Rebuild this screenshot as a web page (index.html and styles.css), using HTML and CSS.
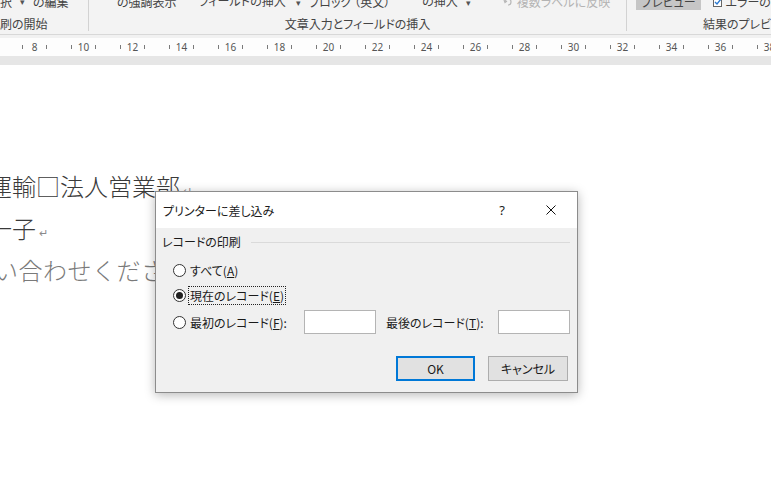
FILE: index.html
```html
<!DOCTYPE html>
<html lang="ja">
<head>
<meta charset="utf-8">
<title>プリンターに差し込み</title>
<link rel="stylesheet" href="styles.css">
</head>
<body>
<div class="screen">
  <div class="ribbon">
    <div class="grp g1">
      <div class="top"><span>択</span><span class="caret">▾</span><span class="g1-edit">の編集</span></div>
      <div class="lbl">刷の開始</div>
    </div>
    <div class="grp g2">
      <div class="top">
        <span class="i1">の強調表示</span>
        <span class="i2">フィールドの挿入<span class="caret">▾</span></span>
        <span class="i3">ブロック</span>
        <span class="i4">（英文）</span>
        <span class="i5">の挿入<span class="caret">▾</span></span>
        <span class="i6 dis"><svg class="ico" viewBox="0 0 10 10" width="10" height="10"><path d="M2 5 A3 3 0 1 1 5 8" fill="none" stroke="#b8b8b8" stroke-width="1.2"/><path d="M1 3 L2 5.5 L4 4" fill="none" stroke="#b8b8b8" stroke-width="1.2"/></svg>複数ラベルに反映</span>
      </div>
      <div class="lbl center">文章入力とフィールドの挿入</div>
    </div>
    <div class="grp g3">
      <div class="top">
        <span class="pressed">プレビュー</span>
        <span class="i7"><svg class="ico" viewBox="0 0 10 10" width="10" height="10"><rect x="0.5" y="0.5" width="8" height="9" fill="#fff" stroke="#666"/><path d="M2 5 L4 7 L8 2" fill="none" stroke="#2b79d0" stroke-width="1.4"/></svg>エラーのチェック</span>
      </div>
      <div class="lbl g3-lbl">結果のプレビュー</div>
    </div>
  </div>
  <div class="band"></div>
  <div class="ruler">
    <div class="cell"><i></i><b>8</b><i></i></div>
    <div class="cell"><i></i><b>10</b><i></i></div>
    <div class="cell"><i></i><b>12</b><i></i></div>
    <div class="cell"><i></i><b>14</b><i></i></div>
    <div class="cell"><i></i><b>16</b><i></i></div>
    <div class="cell"><i></i><b>18</b><i></i></div>
    <div class="cell"><i></i><b>20</b><i></i></div>
    <div class="cell"><i></i><b>22</b><i></i></div>
    <div class="cell"><i></i><b>24</b><i></i></div>
    <div class="cell"><i></i><b>26</b><i></i></div>
    <div class="cell"><i></i><b>28</b><i></i></div>
    <div class="cell"><i></i><b>30</b><i></i></div>
    <div class="cell"><i></i><b>32</b><i></i></div>
    <div class="cell"><i></i><b>34</b><i></i></div>
    <div class="cell"><i></i><b>36</b><i></i></div>
    <div class="cell"><i></i><b>38</b><i></i></div>
  </div>
  <div class="workspace"></div>
  <div class="page">
    <p class="line dark">運輸□法人営業部<span class="pm">↵</span></p>
    <p class="line dark">一子<span class="pm">↵</span></p>
    <p class="line light l3">い合わせください。</p>
  </div>

  <div class="dialog">
    <div class="dlg-title">
      <span class="dlg-name">プリンターに差し込み</span>
      <span class="dlg-help">?</span>
      <span class="dlg-close"><svg viewBox="0 0 10 10" width="10" height="10"><path d="M0.5 0.5 L9.5 9.5 M9.5 0.5 L0.5 9.5" stroke="#111" stroke-width="1" fill="none"/></svg></span>
    </div>
    <div class="dlg-body">
      <div class="grp-head"><span>レコードの印刷</span><span class="rule"></span></div>
      <div class="opt first"><span class="radio"></span><span class="opt-lbl">すべて(<u>A</u>)</span></div>
      <div class="opt"><span class="radio on"></span><span class="opt-lbl focus">現在のレコード(<u>E</u>)</span></div>
      <div class="opt range">
        <span class="radio"></span><span class="opt-lbl from">最初のレコード(<u>F</u>):</span>
        <span class="field"></span>
        <span class="opt-lbl to">最後のレコード(<u>T</u>):</span>
        <span class="field"></span>
      </div>
      <div class="btns">
        <button class="btn default">OK</button>
        <button class="btn">キャンセル</button>
      </div>
    </div>
  </div>
</div>
</body>
</html>
```
FILE: styles.css
```css
html, body {
  margin: 0;
  padding: 0;
}
body {
  width: 771px;
  height: 488px;
  overflow: hidden;
  background: #fff;
  font-family: "Noto Sans CJK JP", "Noto Sans", sans-serif;
  font-feature-settings: "palt";
}
.screen {
  position: relative;
  width: 771px;
  height: 488px;
  overflow: hidden;
  display: flex;
  flex-direction: column;
}

/* ribbon */
.ribbon {
  height: 34px;
  flex: none;
  background: #f3f3f3;
  border-bottom: 1px solid #d8d8d8;
  display: flex;
  align-items: flex-start;
  overflow: hidden;
  font-size: 12px;
  color: #444;
  white-space: nowrap;
}
.grp {
  height: 31px;
  display: flex;
  flex-direction: column;
  flex: none;
}
.g1 { width: 88px; border-right: 1px solid #d2d2d2; }
.g2 { width: 537px; border-right: 1px solid #d2d2d2; }
.g3 { flex: 1; }
.top {
  height: 16px;
  line-height: 16px;
  margin-top: -6px;
  display: flex;
  align-items: center;
}
.lbl {
  height: 16px;
  line-height: 16px;
  margin-top: 6px;
}
.lbl.center { text-align: center; }
.caret { font-size: 9px; margin-left: 8px; color: #555; }
.g1-edit { margin-left: 8px; }
.i1 { margin-left: 28px; }
.i2 { margin-left: 22px; }
.i2 .caret { margin-left: 10px; }
.i3 { margin-left: 8px; }
.i4 { margin-left: 3px; }
.i5 { margin-left: 32px; }
.i5 .caret { margin-left: 8px; }
.i6 { margin-left: 32px; display: flex; align-items: center; }
.dis { color: #b4b4b4; }
.ico { margin-right: 4px; flex: none; }
.pressed {
  margin-left: 9px;
  background: #c6c6c6;
  padding: 0 5px;
  line-height: 16px;
}
.i7 { margin-left: 12px; display: flex; align-items: center; }
.i7 .ico { margin-right: 3px; }
.g3-lbl { margin-left: 76px; }

/* ruler */
.band {
  height: 3px;
  flex: none;
  background: #f1f1f1;
}
.ruler {
  height: 18px;
  flex: none;
  background: #fdfdfd;
  display: flex;
  padding-left: 10px;
  overflow: hidden;
}
.cell {
  width: 49px;
  flex: none;
  display: flex;
  justify-content: center;
  align-items: center;
}
.cell i {
  display: block;
  width: 1px;
  height: 4px;
  background: #7a7a7a;
}
.cell b {
  width: 15px;
  margin: 0 4px;
  text-align: center;
  font-weight: normal;
  font-size: 10px;
  color: #555;
  font-family: "Noto Sans", sans-serif;
  line-height: 12px;
}
.workspace {
  height: 9px;
  flex: none;
  background: #e6e6e6;
}

/* page */
.page {
  flex: 1;
  background: #fff;
  padding-top: 100px;
  overflow: hidden;
}
.line {
  margin: 0 0 0 -12px;
  height: 42px;
  line-height: 42px;
  font-size: 24px;
  font-weight: 300;
  font-feature-settings: normal;
  white-space: nowrap;
}
.line.l3 { margin-left: -6px; letter-spacing: 0.5px; }
.dark { color: #3a3a3a; }
.light { color: #7a7a7a; }
.pm {
  font-size: 11px;
  color: #8a8a8a;
  margin-left: 3px;
  vertical-align: 1px;
}

/* dialog */
.dialog {
  position: absolute;
  left: 155px;
  top: 191px;
  width: 421px;
  border: 1px solid #8c8c8c;
  background: #f0f0f0;
  box-shadow: 0 2px 10px rgba(0,0,0,0.28);
  font-size: 12px;
  color: #1a1a1a;
}
.dlg-title {
  height: 36px;
  background: #fff;
  display: flex;
  align-items: center;
  padding-left: 7px;
}
.dlg-name { flex: 1; }
.dlg-help {
  width: 44px;
  text-align: center;
  font-size: 13px;
  font-family: "Noto Sans", sans-serif;
}
.dlg-close {
  width: 53px;
  height: 36px;
  display: flex;
  align-items: center;
  justify-content: center;
}
.dlg-body {
  padding: 6px 7px 11px 6px;
}
.grp-head {
  height: 16px;
  line-height: 16px;
  display: flex;
  align-items: center;
}
.rule {
  flex: 1;
  height: 1px;
  background: #dadada;
  margin-left: 10px;
}
.opt {
  height: 25px;
  display: flex;
  align-items: center;
  padding-left: 11px;
}
.opt.first { margin-top: 8px; }
.opt.range { height: 24px; margin-top: 2px; }
.radio {
  width: 13px;
  height: 13px;
  box-sizing: border-box;
  border: 1px solid #333;
  border-radius: 50%;
  background: #fff;
  display: flex;
  align-items: center;
  justify-content: center;
  flex: none;
}
.radio.on::after {
  content: "";
  width: 7px;
  height: 7px;
  border-radius: 50%;
  background: #222;
}
.opt-lbl {
  margin-left: 4px;
  white-space: nowrap;
}
.focus {
  margin-left: 2px;
  padding: 0 1px;
  border: 1px dotted #222;
  line-height: 17px;
}
.from { width: 114px; }
.to { width: 112px; margin-left: 10px; }
.field {
  width: 72px;
  height: 24px;
  box-sizing: border-box;
  background: #fff;
  border: 1px solid #b4b4b4;
  flex: none;
}
.btns {
  display: flex;
  justify-content: flex-end;
  gap: 13px;
  margin-top: 22px;
  padding-right: 2px;
}
.btn {
  height: 25px;
  width: 80px;
  box-sizing: border-box;
  background: #e1e1e1;
  border: 1px solid #adadad;
  font-family: "Noto Sans CJK JP", "Noto Sans", sans-serif;
  font-feature-settings: "palt";
  font-size: 12px;
  color: #1a1a1a;
  padding: 0;
}
.btn.default {
  width: 79px;
  border: 2px solid #0078d7;
}
```
